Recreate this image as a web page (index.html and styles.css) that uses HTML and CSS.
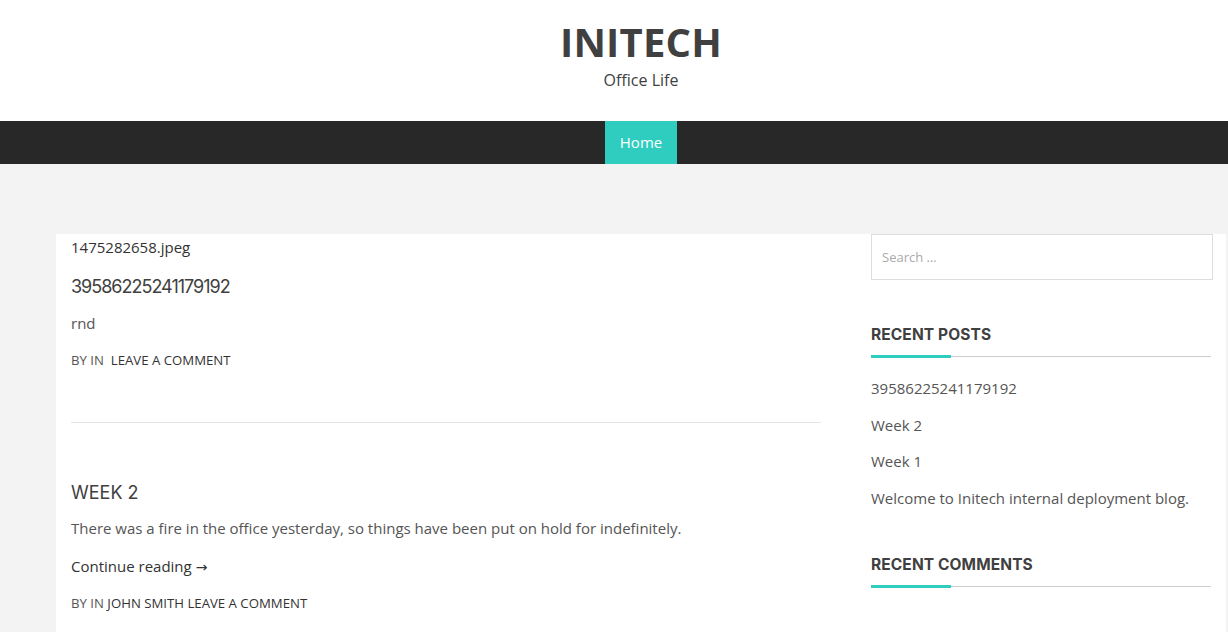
FILE: index.html
```html
<!DOCTYPE html>
<html lang="en">
<head>
<meta charset="utf-8">
<title>Initech – Office Life</title>
<link rel="stylesheet" href="styles.css">
</head>
<body>
<header class="site-header">
  <h1 class="site-title">INITECH</h1>
  <p class="site-desc">Office Life</p>
</header>
<nav class="main-nav">
  <a class="nav-item active" href="#">Home</a>
</nav>
<main class="site-main">
  <div class="container">
    <section class="content">
      <article class="post">
        <p class="attachment">1475282658.jpeg</p>
        <h2 class="post-title num">39586225241179192</h2>
        <p class="post-text first">rnd</p>
        <p class="meta">BY IN &nbsp;<a href="#">LEAVE A COMMENT</a></p>
      </article>
      <hr class="divider">
      <article class="post">
        <h2 class="post-title upper">WEEK 2</h2>
        <p class="post-text">There was a fire in the office yesterday, so things have been put on hold for indefinitely.</p>
        <a class="more" href="#">Continue reading <span class="arrow">→</span></a>
        <p class="meta meta2">BY IN <a href="#">JOHN SMITH</a> <a href="#">LEAVE A COMMENT</a></p>
      </article>
    </section>
    <aside class="sidebar">
      <input class="search" type="search" placeholder="Search …">
      <h3 class="widget-title">RECENT POSTS</h3>
      <ul class="recent">
        <li><a href="#">39586225241179192</a></li>
        <li><a href="#">Week 2</a></li>
        <li><a href="#">Week 1</a></li>
        <li><a href="#">Welcome to Initech internal deployment blog.</a></li>
      </ul>
      <h3 class="widget-title second">RECENT COMMENTS</h3>
    </aside>
  </div>
</main>
</body>
</html>
```
FILE: styles.css
```css
* { box-sizing: border-box; }
html, body { margin: 0; padding: 0; }
body {
  background: #f3f3f3;
  font-family: "Open Sans", "Liberation Sans", sans-serif;
  color: #555;
  height: 632px;
  overflow: hidden;
}
a { color: inherit; text-decoration: none; }

.site-header {
  background: #fff;
  height: 121px;
  padding-top: 18px;
  padding-left: 54px;
  text-align: center;
}
.site-title {
  margin: 0;
  font-size: 40px;
  line-height: 48px;
  font-weight: 700;
  letter-spacing: 0.2px;
  color: #404040;
}
.site-desc {
  margin: 2px 0 0;
  font-size: 16px;
  line-height: 24px;
  color: #404040;
}

.main-nav {
  background: #282828;
  height: 43px;
  display: flex;
  justify-content: center;
  padding-left: 54px;
}
.nav-item {
  display: block;
  padding: 0 15px;
  line-height: 43px;
  font-size: 15px;
  color: #fff;
}
.nav-item.active { background: #2ecdbf; }

.site-main { padding-top: 70px; }
.container {
  margin-left: 56px;
  width: 1170px;
  min-height: 400px;
  background: #fff;
  display: grid;
  grid-template-columns: 750px 342px;
  column-gap: 50px;
  padding-left: 15px;
}

.content { padding-top: 1px; }
.attachment {
  margin: 0;
  font-size: 15px;
  line-height: 24px;
  color: #333;
}
.post-title {
  margin: 15px 0 0;
  font-family: "Inter", "Lato", sans-serif;
  font-variant-numeric: proportional-nums;
  font-weight: 400;
  font-size: 18px;
  line-height: 26px;
  color: #404040;
}
.post-title.num { letter-spacing: -1px; }
.post-title.upper { margin-top: 57px; }
.post-text {
  margin: 10px 0 0;
  font-size: 15px;
  line-height: 24px;
  color: #555;
}
.post-text.first { margin-top: 11px; }
.more {
  display: block;
  margin-top: 14px;
  font-size: 15px;
  line-height: 24px;
  color: #333;
}
.arrow {
  font-family: "DejaVu Sans", sans-serif;
  font-size: 14px;
}
.meta {
  margin: 15px 0 0;
  font-size: 13.2px;
  line-height: 20px;
  color: #555;
}
.meta a { color: #333; }
.meta2 { margin-top: 14px; }
.divider {
  margin: 52px 0 0;
  border: 0;
  border-top: 1px solid #e5e5e5;
  height: 0;
}

.sidebar { padding-top: 0; }
.search {
  display: block;
  width: 342px;
  height: 46px;
  border: 1px solid #ddd;
  padding: 0 10px;
  font-family: "Open Sans", "Liberation Sans", sans-serif;
  font-size: 13px;
  color: #555;
  outline: none;
  border-radius: 0;
  -webkit-appearance: none;
  appearance: none;
}
.search::placeholder { color: #aaa; }
.widget-title {
  position: relative;
  margin: 45px 0 0;
  width: 340px;
  font-family: "Inter", "Lato", sans-serif;
  font-weight: 700;
  font-size: 15.5px;
  letter-spacing: 0.1px;
  line-height: 20px;
  color: #404040;
  padding-bottom: 11px;
  border-bottom: 1px solid #ccc;
}
.widget-title::after {
  content: "";
  position: absolute;
  left: 0;
  bottom: -2px;
  width: 80px;
  height: 3px;
  background: #2ecdbf;
}
.widget-title.second { margin-top: 45px; }
.recent {
  list-style: none;
  margin: 19px 0 0;
  padding: 0;
}
.recent li {
  font-size: 15px;
  line-height: 24px;
  margin-bottom: 12.5px;
  color: #555;
}
.recent li:last-child { margin-bottom: 0; }
```
